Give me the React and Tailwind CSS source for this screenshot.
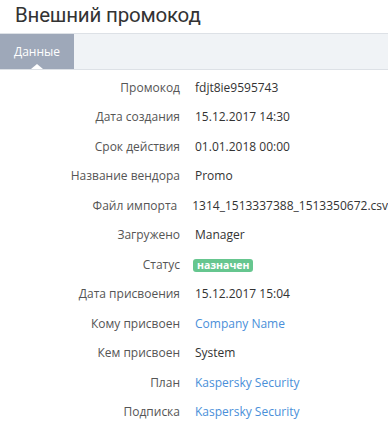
const rows = [
  { label: 'Промокод', value: 'fdjt8ie9595743' },
  { label: 'Дата создания', value: '15.12.2017 14:30' },
  { label: 'Срок действия', value: '01.01.2018 00:00' },
  { label: 'Название вендора', value: 'Promo' },
  { label: 'Файл импорта', value: '1314_1513337388_1513350672.csv' },
  { label: 'Загружено', value: 'Manager' },
  { label: 'Статус', badge: 'назначен' },
  { label: 'Дата присвоения', value: '15.12.2017 15:04' },
  { label: 'Кому присвоен', value: 'Company Name', link: true },
  { label: 'Кем присвоен', value: 'System' },
  { label: 'План', value: 'Kaspersky Security', link: true },
  { label: 'Подписка', value: 'Kaspersky Security', link: true },
];

export default function App() {
  return (
    <div className="w-[388px] h-[422px] overflow-hidden bg-white" style={{ fontFamily: '"Open Sans", sans-serif' }}>
      <h1
        className="px-[15px] pt-[1px] h-[33px] text-[20.5px] leading-[28px] tracking-[-0.2px] text-[#333]"
        style={{ fontFamily: 'Roboto, sans-serif' }}
      >
        Внешний промокод
      </h1>

      {/* tabs */}
      <div className="flex h-[37px] bg-[#f0f3f6] border-y border-[#dde1e6]">
        <div className="relative w-[74px] bg-[#9ea8b9] flex items-center justify-center text-[12px] text-white">
          Данные
          <span className="absolute bottom-0 left-[31px] w-0 h-0 border-x-[6px] border-x-transparent border-b-[5px] border-b-white" />
        </div>
      </div>

      <div className="pt-[3px]">
        {rows.map((r) => (
          <div key={r.label} className="flex items-center h-[29.5px] text-[12px]">
            <div className="w-[180px] text-right text-[#555]">{r.label}</div>
            <div className="ml-[15px]">
              {r.badge ? (
                <span className="inline-block -ml-[2px] mt-[2px] px-[4px] h-[13px] leading-[13px] rounded-[3px] bg-[#66c68f] text-white text-[10.5px] font-bold">
                  {r.badge}
                </span>
              ) : (
                <span className={r.link ? 'text-[#4a8fd9]' : 'text-[#333]'}>{r.value}</span>
              )}
            </div>
          </div>
        ))}
      </div>
    </div>
  );
}
